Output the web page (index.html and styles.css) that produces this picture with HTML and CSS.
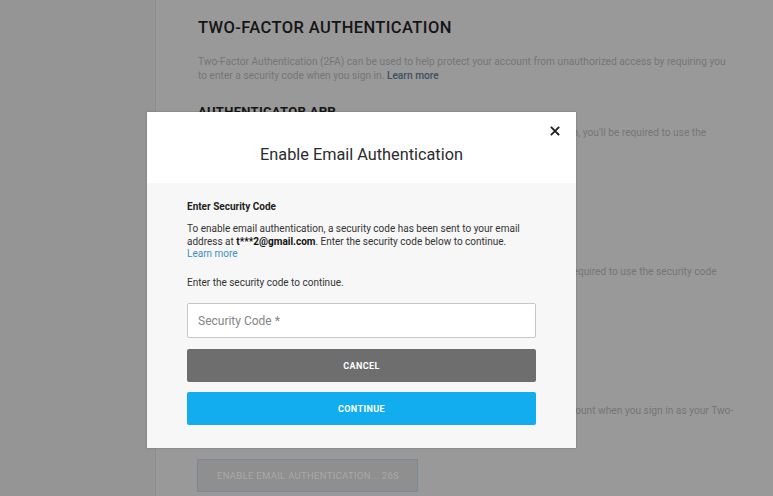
FILE: index.html
```html
<!doctype html>
<html lang="en">
<head>
  <meta charset="UTF-8">
  <meta name="viewport" content="width=device-width, initial-scale=1.0">
  <title>Two-Factor Authentication</title>
  <link rel="stylesheet" href="styles.css">
</head>
<body>
  <aside class="sidebar"></aside>

  <main class="content">
    <h1 class="page-title">TWO-FACTOR AUTHENTICATION</h1>
    <p class="page-text">Two-Factor Authentication (2FA) can be used to help protect your account from unauthorized access by requiring you<br>to enter a security code when you sign in. <a href="#" class="muted-link">Learn more</a></p>

    <section class="method">
      <h2 class="method-title">AUTHENTICATOR APP</h2>
      <p class="page-text">Use a mobile authenticator app as your Two-Factor Authentication. When you sign in, you'll be required to use the<br>security code provided by your app.</p>
      <button class="method-button">ENABLE AUTHENTICATOR APP</button>
    </section>

    <section class="method">
      <h2 class="method-title">SMS AUTHENTICATION</h2>
      <p class="page-text">Use your cell phone as your Two-Factor Authentication. When you sign in, you'll be required to use the security code<br>sent to your phone.</p>
      <button class="method-button">ENABLE SMS AUTHENTICATION</button>
    </section>

    <section class="method">
      <h2 class="method-title">EMAIL AUTHENTICATION</h2>
      <p class="page-text">Email authentication will now send a security code to the email address on your account when you sign in as your Two-<br>Factor Authentication.</p>
      <button class="method-button">ENABLE EMAIL AUTHENTICATION... 26S</button>
    </section>
  </main>

  <div class="modal">
    <div class="modal-header">
      <h3 class="modal-title">Enable Email Authentication</h3>
      <button class="modal-close" aria-label="Close">
        <svg width="10" height="10" viewBox="0 0 10 10">
          <path d="M1.5 1.5 L8.5 8.5 M8.5 1.5 L1.5 8.5" stroke="#222" stroke-width="1.8" stroke-linecap="square"/>
        </svg>
      </button>
    </div>
    <div class="modal-body">
      <p class="field-label">Enter Security Code</p>
      <p class="modal-text">To enable email authentication, a security code has been sent to your email address at <b>t***2@gmail.com</b>. Enter the security code below to continue.<br><a href="#" class="blue-link">Learn more</a></p>
      <p class="modal-text hint">Enter the security code to continue.</p>
      <input class="code-input" type="text" placeholder="Security Code *">
      <button class="btn btn-cancel">CANCEL</button>
      <button class="btn btn-continue">CONTINUE</button>
    </div>
  </div>
</body>
</html>
```

FILE: styles.css
```css
* {
    margin: 0;
    padding: 0;
    box-sizing: border-box;
    font-family: Roboto, "Liberation Sans", sans-serif;
}

html, body {
    height: 100%;
    overflow: hidden;
}

body {
    display: flex;
    background-color: #999999;
}

.sidebar {
    width: 156px;
    flex-shrink: 0;
    background-color: #959595;
    border-right: 1px solid #8e8e8e;
}

.content {
    flex: 1;
    padding: 17px 0 0 42px;
}

.page-title {
    font-size: 16.5px;
    line-height: 22px;
    font-weight: 500;
    letter-spacing: 0.4px;
    color: #151515;
}

.page-text {
    font-size: 10.2px;
    line-height: 14px;
    color: #767676;
    margin-top: 16px;
    white-space: nowrap;
}

.muted-link {
    color: #3d5060;
    text-decoration: none;
    font-weight: 500;
}

.method {
    margin-top: 21px;
    margin-bottom: 29px;
}

.method + .method {
    margin-top: 0;
}

.method-title {
    font-size: 13px;
    line-height: 16px;
    font-weight: 700;
    letter-spacing: 0.3px;
    color: #151515;
}

.method .page-text {
    margin-top: 6px;
}

.method-button {
    display: block;
    margin-top: 27px;
    width: 221px;
    height: 33px;
    margin-left: -1px;
    background-color: #8f8f8f;
    border: 1px solid #7d8898;
    color: #a9a9a9;
    font-size: 9.5px;
    letter-spacing: 0.3px;
    text-align: left;
    padding-left: 19px;
}

/* modal dialog on top of the page */
.modal {
    position: absolute;
    left: 147px;
    top: 112px;
    width: 429px;
    background-color: #f7f7f7;
    box-shadow: 0 0 2px rgba(0, 0, 0, 0.25);
}

.modal-header {
    position: relative;
    height: 71px;
    background-color: #fff;
    display: flex;
    align-items: center;
    justify-content: center;
    padding-top: 14px;
}

.modal-title {
    font-size: 16.3px;
    font-weight: 400;
    color: #2b2b2b;
}

.modal-close {
    position: absolute;
    top: 14px;
    right: 16px;
    width: 10px;
    height: 10px;
    border: none;
    background: none;
    display: flex;
}

.modal-body {
    padding: 18px 40px 23px 40px;
    display: flex;
    flex-direction: column;
}

.field-label {
    font-size: 10px;
    line-height: 12px;
    font-weight: 700;
    color: #222;
}

.modal-text {
    font-size: 10px;
    line-height: 12.5px;
    color: #333;
    margin-top: 10px;
}

.modal-text b {
    color: #111;
}

.blue-link {
    color: #3e8fc4;
    text-decoration: none;
}

.hint {
    margin-top: 16px;
}

.code-input {
    margin-top: 14px;
    height: 35px;
    border: 1px solid #c6c6c6;
    border-radius: 2px;
    background-color: #fff;
    padding-left: 10px;
    font-size: 12px;
    color: #333;
    outline: none;
}

.code-input::placeholder {
    color: #858585;
}

.btn {
    height: 33px;
    border: none;
    border-radius: 2px;
    color: #fff;
    font-size: 9px;
    font-weight: 700;
    letter-spacing: 0.4px;
}

.btn-cancel {
    margin-top: 11px;
    background-color: #6e6e6e;
}

.btn-continue {
    margin-top: 10px;
    background-color: #12adee;
}
```
